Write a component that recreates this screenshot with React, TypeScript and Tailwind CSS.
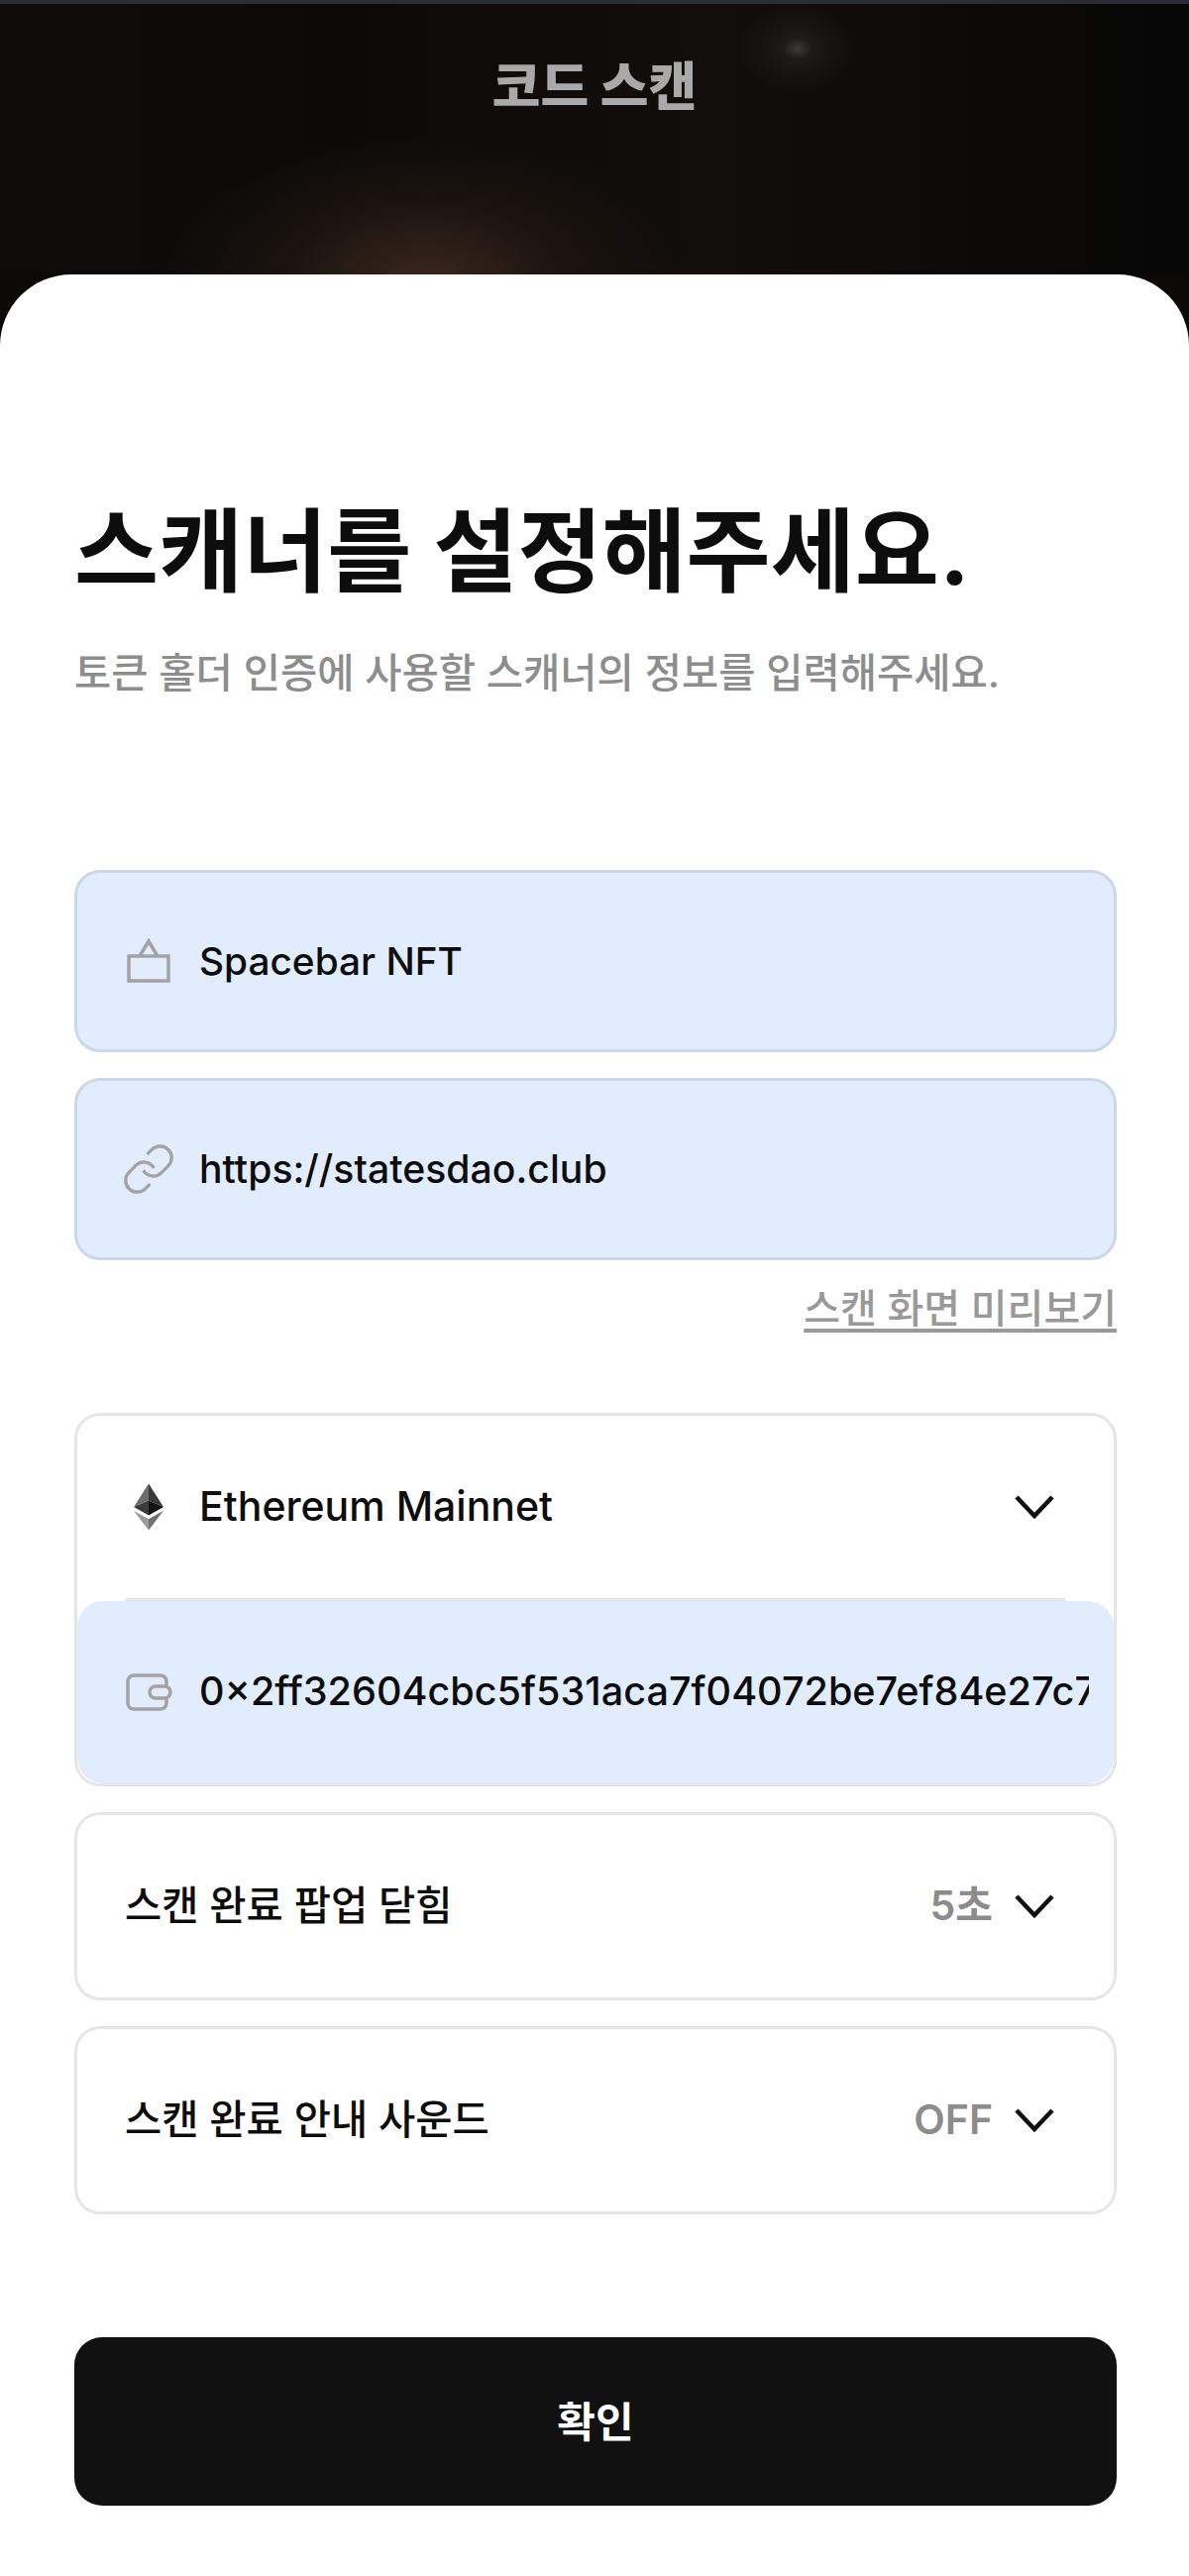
import React from 'react';
import { Link } from 'lucide-react';

const FONT = "font-['Inter','Noto_Sans_CJK_KR',sans-serif]";

const Chevron = () => (
    <svg width="44" height="28" viewBox="0 0 44 28" fill="none" className="shrink-0">
        <polyline points="4,4 22,23 40,4" stroke="#111111" strokeWidth="4.5" strokeLinejoin="miter" />
    </svg>
);

const ShopIcon = () => (
    <svg width="48" height="46" viewBox="0 0 48 46" fill="none" stroke="#a3a3a3" strokeWidth="3.5">
        <rect x="4" y="18" width="40" height="25" />
        <polyline points="15,18 24,3 33,18" />
    </svg>
);

const WalletIcon = () => (
    <svg width="48" height="40" viewBox="0 0 48 40" fill="none" stroke="#a3a3a3" strokeWidth="3.5">
        <path d="M42 13V9a6 6 0 0 0-6-6H9a6 6 0 0 0-6 6v22a6 6 0 0 0 6 6h27a6 6 0 0 0 6-6v-4" />
        <rect x="25" y="14" width="21" height="12" rx="6" />
    </svg>
);

const EthIcon = () => (
    <svg width="30" height="48" viewBox="0 0 32 50">
        <polygon points="16,0 0,25 16,18" fill="#6e6e6e" />
        <polygon points="16,0 32,25 16,18" fill="#3a3a3a" />
        <polygon points="0,25 16,18 16,34" fill="#3c3c3c" />
        <polygon points="32,25 16,18 16,34" fill="#141414" />
        <polygon points="0,29 16,38 16,50" fill="#9a9a9a" />
        <polygon points="32,29 16,38 16,50" fill="#707070" />
    </svg>
);

const InputCard = ({ icon, text, size }: { icon: React.ReactNode; text: string; size: string }) => (
    <div className="flex items-center h-[184px] rounded-[26px] border-[3px] border-[#cbd8e8] bg-[#e1edfd]">
        <div className="flex w-[123px] shrink-0 items-center justify-center pl-[20px]">{icon}</div>
        <span className={`${size} font-medium text-[#0d0d0d]`}>{text}</span>
    </div>
);

const SelectRow = ({ label, value }: { label: string; value: string }) => (
    <div className="flex items-center h-[190px] rounded-[26px] border-[3px] border-[#e6e6e6] pl-[48px] pr-[58px]">
        <span className="flex-1 text-[40.5px] font-medium text-[#0d0d0d]">{label}</span>
        <span className="mr-[20px] text-[41px] font-semibold text-[#8c8c8c]">{value}</span>
        <Chevron />
    </div>
);

export default function App() {
    return (
        <div className={`${FONT} min-h-[2600px] w-[1200px] overflow-hidden bg-[#0b0a09]`}>
            <div className="h-[4px] bg-[#2c2c33]" />
            <div className="relative h-[273px] bg-[radial-gradient(ellipse_260px_150px_at_430px_280px,#3a271b_0%,#1a130f_55%,transparent_100%),linear-gradient(90deg,#0e0c0b_0%,#0c0a09_30%,#120e0b_60%,#070707_100%)]">
                <div className="absolute left-[745px] top-0 h-[90px] w-[120px] rounded-full bg-[radial-gradient(ellipse_closest-side,#3c3b38_0%,#1c1b18_24%,#151411_60%,transparent_100%)]" />
                <div className="flex justify-center pt-[53px]">
                    <h1 className="text-[53px] font-extrabold leading-[62px] text-[#a9a9a9]">코드 스캔</h1>
                </div>
            </div>
            <div className="rounded-t-[72px] bg-white pl-[75px] pr-[73px] h-[2323px]">
                <h2 className="pt-[216px] text-[92.5px] font-bold leading-[126px] text-[#0d0d0d]">스캐너를 설정해주세요.</h2>
                <p className="mt-[36px] text-[40.5px] font-medium leading-[50px] text-[#8d8d8d]">토큰 홀더 인증에 사용할 스캐너의 정보를 입력해주세요.</p>

                <div className="mt-[173px] flex flex-col gap-[26px]">
                    <InputCard icon={<ShopIcon />} text="Spacebar NFT" size="text-[38.8px]" />
                    <InputCard icon={<Link size={56} strokeWidth={1.4} color="#a3a3a3" />} text="https://statesdao.club" size="text-[39.2px]" />
                </div>
                <div className="mt-[24px] flex justify-end">
                    <a className="text-[40px] font-medium leading-[50px] text-[#999999] underline underline-offset-[6px]">스캔 화면 미리보기</a>
                </div>

                <div className="mt-[80px] overflow-hidden rounded-[26px] border-[3px] border-[#e6e6e6]">
                    <div className="flex h-[184px] items-center pr-[58px]">
                        <div className="flex w-[123px] shrink-0 items-center justify-center pl-[20px]"><EthIcon /></div>
                        <span className="flex-1 text-[41px] font-medium text-[#0d0d0d]">Ethereum Mainnet</span>
                        <Chevron />
                    </div>
                    <div className="mx-[49px] h-[3px] bg-[#e6e6e6]" />
                    <div className="flex h-[184px] items-center rounded-[26px] bg-[#e1edfd]">
                        <div className="flex w-[123px] shrink-0 items-center justify-center pl-[20px]"><WalletIcon /></div>
                        <span className="w-[898px] overflow-hidden whitespace-nowrap text-[39.6px] font-medium text-[#0d0d0d]">0×2ff32604cbc5f531aca7f04072be7ef84e27c7</span>
                    </div>
                </div>

                <div className="mt-[26px] flex flex-col gap-[26px]">
                    <SelectRow label="스캔 완료 팝업 닫힘" value="5초" />
                    <SelectRow label="스캔 완료 안내 사운드" value="OFF" />
                </div>

                <button className="mt-[124px] h-[170px] w-full rounded-[28px] bg-[#111111] text-[42px] font-bold text-white">확인</button>
            </div>
        </div>
    );
}
